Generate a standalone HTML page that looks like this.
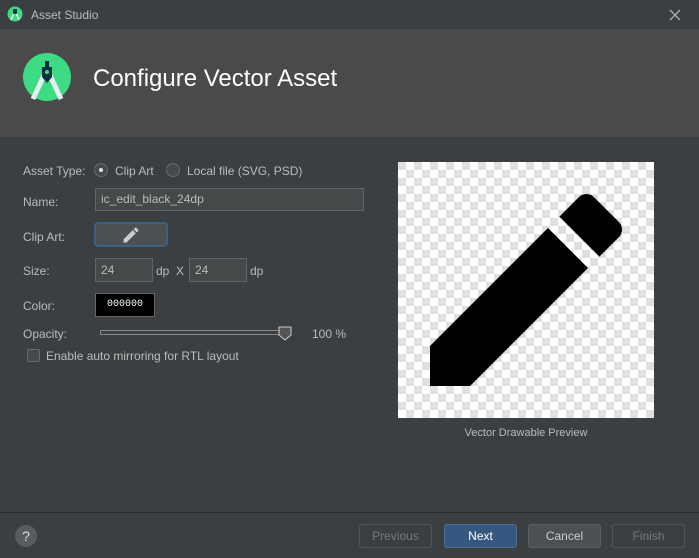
<!DOCTYPE html>
<html><head><style>
*{margin:0;padding:0;box-sizing:border-box}
body{width:699px;height:558px;background:#3c3f41;font-family:"Liberation Sans","DejaVu Sans",sans-serif;color:#bbbbbb;font-size:12px;position:relative;overflow:hidden}
.a{position:absolute}
.tb{left:0;top:0;width:699px;height:29px;background:#3c3f41}
.hd{left:0;top:29px;width:699px;height:108px;background:#4a4a4a}
.lbl{font-size:12px;color:#bbb}
.field{background:#45494a;border:1px solid #646464;color:#bbb;font-size:12px;padding-left:5px;line-height:20px}
.btn{border:1px solid #5e6060;border-radius:3px;text-align:center;line-height:22px;font-size:12px}
</style></head><body>
<div class="a tb"></div>
<svg class="a" style="left:7px;top:6px" width="16" height="16" viewBox="0 0 16 16"><circle cx="8" cy="8" r="7.5" fill="#3ddc84"/><path d="M4 14 L8 5 L12 14" stroke="#e8e8e8" stroke-width="1.6" fill="none"/><rect x="6" y="3" width="4" height="5" rx="1" fill="#073042"/></svg>
<div class="a" style="left:31px;top:8px;font-size:12px;color:#bbb">Asset Studio</div>
<svg class="a" style="left:669px;top:9px" width="12" height="12"><path d="M1 1L11 11M11 1L1 11" stroke="#aaa" stroke-width="1.4"/></svg>
<div class="a hd"></div>
<svg class="a" style="left:23px;top:53px" width="48" height="48" viewBox="0 0 48 48"><circle cx="24" cy="24" r="24" fill="#3ddc84"/><path d="M10 46 L22 20 M38 46 L26 20" stroke="#e8eef0" stroke-width="5" fill="none"/><path d="M19 14h10v10l-5 6-5-6z" fill="#073042"/><rect x="22" y="8" width="4" height="6" fill="#073042"/><circle cx="24" cy="19" r="2" fill="#3ddc84"/></svg>
<div class="a" style="left:93px;top:65px;font-size:24px;color:#fff">Configure Vector Asset</div>

<div class="a lbl" style="left:23px;top:164px">Asset Type:</div>
<div class="a" style="left:94px;top:163px;width:14px;height:14px;border-radius:50%;background:#45494a;border:1px solid #6a6a6a"></div>
<div class="a" style="left:99px;top:168px;width:4px;height:4px;border-radius:50%;background:#ddd"></div>
<div class="a lbl" style="left:115px;top:164px">Clip Art</div>
<div class="a" style="left:166px;top:163px;width:14px;height:14px;border-radius:50%;background:#45494a;border:1px solid #6a6a6a"></div>
<div class="a lbl" style="left:187px;top:164px">Local file (SVG, PSD)</div>

<div class="a lbl" style="left:23px;top:195px">Name:</div>
<div class="a field" style="left:95px;top:188px;width:269px;height:23px">ic_edit_black_24dp</div>

<div class="a lbl" style="left:23px;top:230px">Clip Art:</div>
<div class="a" style="left:94px;top:222px;width:74px;height:25px;border:2px solid #3d6185;border-radius:4px;background:#4c5052"></div>
<svg class="a" style="left:121px;top:225px" width="20" height="20" viewBox="0 0 24 24"><path fill="#ccc" d="M3 17.25V21h3.75L17.81 9.94l-3.75-3.75L3 17.25zM20.71 7.04c.39-.39.39-1.02 0-1.41l-2.34-2.34c-.39-.39-1.02-.39-1.41 0l-1.83 1.83 3.75 3.75 1.83-1.83z"/></svg>

<div class="a lbl" style="left:23px;top:264px">Size:</div>
<div class="a field" style="left:95px;top:258px;width:58px;height:24px;line-height:22px">24</div>
<div class="a lbl" style="left:156px;top:264px">dp&nbsp; X</div>
<div class="a field" style="left:189px;top:258px;width:58px;height:24px;line-height:22px">24</div>
<div class="a lbl" style="left:250px;top:264px">dp</div>

<div class="a lbl" style="left:23px;top:299px">Color:</div>
<div class="a" style="left:95px;top:293px;width:60px;height:24px;background:#000;border:1px solid #666;color:#fff;font-size:10px;text-align:center;line-height:22px;font-family:'Liberation Mono',monospace">000000</div>

<div class="a lbl" style="left:23px;top:327px">Opacity:</div>
<div class="a" style="left:100px;top:330px;width:185px;height:5px;border:1px solid #888;background:#3c3f41"></div>
<svg class="a" style="left:278px;top:326px" width="14" height="15"><path d="M1 1h12v8l-6 5-6-5z" fill="#555" stroke="#ccc"/></svg>
<div class="a lbl" style="left:312px;top:327px">100 %</div>

<div class="a" style="left:27px;top:349px;width:13px;height:13px;border:1px solid #6a6a6a;background:#45494a;border-radius:2px"></div>
<div class="a lbl" style="left:46px;top:349px">Enable auto mirroring for RTL layout</div>

<div class="a" style="left:398px;top:162px;width:256px;height:256px;background-color:#fff;background-image:linear-gradient(45deg,#e0e0e0 25%,transparent 25%,transparent 75%,#e0e0e0 75%),linear-gradient(45deg,#e0e0e0 25%,transparent 25%,transparent 75%,#e0e0e0 75%);background-size:16px 16px;background-position:8px 0,0 8px"></div>
<svg class="a" style="left:398px;top:162px" width="256" height="256" viewBox="0 0 24 24"><path fill="#000" d="M3 17.25V21h3.75L17.81 9.94l-3.75-3.75L3 17.25zM20.71 7.04c.39-.39.39-1.02 0-1.41l-2.34-2.34c-.39-.39-1.02-.39-1.41 0l-1.83 1.83 3.75 3.75 1.83-1.83z"/></svg>
<div class="a lbl" style="left:398px;top:427px;width:256px;text-align:center;font-size:11px">Vector Drawable Preview</div>

<div class="a" style="left:0;top:512px;width:699px;height:1px;background:#2b2b2b"></div>
<div class="a" style="left:15px;top:525px;width:22px;height:22px;border-radius:50%;background:#5a5d5f;color:#ddd;text-align:center;line-height:22px;font-size:14px">?</div>
<div class="a btn" style="left:359px;top:524px;width:73px;height:24px;color:#777;border-color:#555">Previous</div>
<div class="a btn" style="left:444px;top:524px;width:73px;height:24px;color:#fff;background:#365880;border-color:#4c708c">Next</div>
<div class="a btn" style="left:528px;top:524px;width:73px;height:24px;color:#ccc;background:#4c5052">Cancel</div>
<div class="a btn" style="left:612px;top:524px;width:73px;height:24px;color:#777;border-color:#555">Finish</div>
</body></html>
